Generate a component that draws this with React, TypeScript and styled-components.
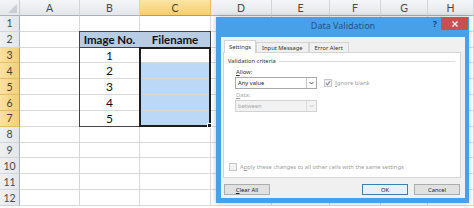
import React from "react";
import styled, { createGlobalStyle } from "styled-components";

const GlobalStyle = createGlobalStyle`
  html, body {
    margin: 0;
    padding: 0;
    background: #fff;
  }
  body {
    overflow: hidden;
    font-family: Lato, "Liberation Sans", sans-serif;
  }
`;

const COLS = ["A", "B", "C", "D", "E", "F", "G", "H"];
const COL_W = [60, 60, 71, 61, 58, 51, 47, 46];
const ROWS = [1, 2, 3, 4, 5, 6, 7, 8, 9, 10, 11, 12];

type Fill = "head" | "sel" | undefined;

const cellAt = (c: string, r: number): { text?: string; fill?: Fill; bold?: boolean } => {
  if (r === 2 && c === "B") return { text: "Image No.", fill: "head", bold: true };
  if (r === 2 && c === "C") return { text: "Filename", fill: "head", bold: true };
  if (r >= 3 && r <= 7 && c === "B") return { text: String(r - 2) };
  if (r >= 4 && r <= 7 && c === "C") return { fill: "sel" };
  return {};
};

const Screen = styled.div`
  position: relative;
  width: 474px;
  height: 208px;
  overflow: hidden;
  background: #fff;
`;

const Sheet = styled.div`
  display: grid;
  & > * {
    grid-area: 1 / 1;
  }
`;

const Grid = styled.div`
  display: grid;
  grid-template-columns: 20px ${COL_W.map((w) => w + "px").join(" ")};
  grid-template-rows: 16px repeat(12, 15.83px);
`;

const Overlay = styled(Grid)`
  pointer-events: none;
`;

const Corner = styled.div`
  position: relative;
  background: linear-gradient(#f3f4f6, #e4e7eb);
  border-right: 1px solid #c9cdd3;
  border-bottom: 1px solid #aab1ba;
  &::after {
    content: "";
    position: absolute;
    right: 2px;
    bottom: 2px;
    border-style: solid;
    border-width: 0 0 9px 9px;
    border-color: transparent transparent #c9ced4 transparent;
  }
`;

const ColHead = styled.div<{ $active?: boolean }>`
  display: flex;
  align-items: center;
  justify-content: center;
  font-size: 10.5px;
  color: ${(p) => (p.$active ? "#4a3f2a" : "#4a4a4a")};
  background: ${(p) =>
    p.$active ? "linear-gradient(#fbe4a6, #f5cf6e)" : "linear-gradient(#f5f6f8, #e3e6ea)"};
  border-right: 1px solid ${(p) => (p.$active ? "#e2bd6a" : "#d2d6db")};
  border-bottom: 1px solid ${(p) => (p.$active ? "#c79a3e" : "#aab1ba")};
`;

const RowHead = styled.div<{ $active?: boolean }>`
  display: flex;
  align-items: center;
  justify-content: center;
  font-size: 10.5px;
  color: ${(p) => (p.$active ? "#4a3f2a" : "#4a4a4a")};
  background: ${(p) =>
    p.$active ? "linear-gradient(90deg, #fbe1a0, #f6cf76)" : "linear-gradient(90deg, #eef0f3, #e3e6ea)"};
  border-right: 1px solid ${(p) => (p.$active ? "#c79a3e" : "#aab1ba")};
  border-bottom: 1px solid ${(p) => (p.$active ? "#e2bd6a" : "#d2d6db")};
`;

const Cell = styled.div<{ $fill?: Fill; $bold?: boolean }>`
  display: flex;
  align-items: center;
  justify-content: center;
  font-size: ${(p) => (p.$bold ? 11.5 : 12)}px;
  font-weight: ${(p) => (p.$bold ? 700 : 400)};
  color: #111;
  background: ${(p) => (p.$fill === "head" ? "#b8cce4" : p.$fill === "sel" ? "#bcd8f7" : "#fff")};
  border-right: 1px solid ${(p) => (p.$fill === "head" ? "#b8cce4" : "#d9d9d9")};
  border-bottom: 1px solid #d9d9d9;
`;

const TableBox = styled.div`
  grid-column: 3 / 5;
  grid-row: 3 / 9;
  margin: -1px 0 0 -1px;
  border: 1px solid #444;
`;

const HeaderRule = styled.div`
  grid-column: 3 / 5;
  grid-row: 3 / 4;
  margin-left: -1px;
  border-bottom: 1px solid #444;
`;

const Selection = styled.div`
  position: relative;
  grid-column: 4 / 5;
  grid-row: 4 / 9;
  margin: -1px 0 0 -1px;
  border: 2px solid #1e1e1e;
  &::after {
    content: "";
    position: absolute;
    right: -3px;
    bottom: -3px;
    width: 3px;
    height: 3px;
    background: #1e1e1e;
    border: 1px solid #fff;
  }
`;

/* dialog */

const Dialog = styled.div`
  position: absolute;
  left: 216px;
  top: 17px;
  width: 253px;
  height: 186px;
  box-sizing: border-box;
  display: flex;
  flex-direction: column;
  padding: 0 4px 5px 5px;
  background: #48a0e8;
  box-shadow: 0 0 5px rgba(0, 0, 0, 0.25);
  font-family: "Noto Sans", "Open Sans", sans-serif;
`;

const TitleBar = styled.div`
  height: 20px;
  display: grid;
  grid-template-columns: 1fr auto 1fr;
`;

const Title = styled.div`
  grid-column: 2;
  padding-top: 3px;
  font-size: 9px;
  line-height: 12px;
  color: #22528c;
`;

const Controls = styled.div`
  grid-column: 3;
  display: flex;
  justify-content: flex-end;
  align-items: flex-start;
  gap: 4px;
  margin-right: -3px;
`;

const Help = styled.span`
  padding-top: 2px;
  font-size: 9px;
  line-height: 10px;
  font-weight: 700;
  color: #1f4a80;
`;

const CloseBtn = styled.div`
  width: 27px;
  height: 13px;
  display: flex;
  align-items: center;
  justify-content: center;
  background: #c75050;
`;

const Body = styled.div`
  flex: 1;
  display: flex;
  flex-direction: column;
  padding: 3px 4px 3px 2px;
  background: #f0f0f0;
  font-size: 5.8px;
  color: #222;
`;

const TabStrip = styled.div`
  height: 12px;
  display: flex;
  align-items: flex-end;
  padding-left: 1px;
  position: relative;
  z-index: 1;
`;

const Tab = styled.div<{ $active?: boolean }>`
  height: ${(p) => (p.$active ? 13 : 10)}px;
  margin-bottom: ${(p) => (p.$active ? -1 : 0)}px;
  box-sizing: border-box;
  display: flex;
  align-items: center;
  padding: 0 ${(p) => (p.$active ? 4 : 5)}px;
  border: 1px solid #d4d4d4;
  border-bottom: none;
  background: ${(p) => (p.$active ? "#fff" : "#f0f0f0")};
  color: #333;
`;

const Panel = styled.div`
  height: 126px;
  box-sizing: border-box;
  display: flex;
  flex-direction: column;
  padding: 4px 5px 6px 4px;
  background: #fff;
  border: 1px solid #d4d4d4;
`;

const GroupTitle = styled.div`
  display: flex;
  align-items: center;
  gap: 3px;
  line-height: 8px;
  color: #333;
  &::after {
    content: "";
    flex: 1;
    height: 1px;
    background: #dcdcdc;
  }
`;

const Field = styled.div`
  display: flex;
  flex-direction: column;
  margin-left: 7px;
`;

const Label = styled.div<{ $disabled?: boolean; $gap: number }>`
  margin-top: ${(p) => p.$gap}px;
  padding-left: 1px;
  line-height: 8px;
  color: ${(p) => (p.$disabled ? "#a8a8a8" : "#333")};
`;

const FieldRow = styled.div`
  display: flex;
  align-items: center;
  gap: 7px;
  margin-top: 1px;
`;

const Combo = styled.div<{ $disabled?: boolean }>`
  width: 82px;
  height: 12px;
  box-sizing: border-box;
  display: flex;
  align-items: stretch;
  border: 1px solid ${(p) => (p.$disabled ? "#d2d2d2" : "#a9a9a9")};
  background: ${(p) => (p.$disabled ? "#f2f2f2" : "#fff")};
  color: ${(p) => (p.$disabled ? "#a8a8a8" : "#222")};
`;

const ComboText = styled.span`
  flex: 1;
  display: flex;
  align-items: center;
  padding-left: 2px;
`;

const ComboArrow = styled.span<{ $disabled?: boolean }>`
  width: 9px;
  display: flex;
  align-items: center;
  justify-content: center;
  border-left: 1px solid ${(p) => (p.$disabled ? "#dcdcdc" : "#c8c8c8")};
`;

const CheckLine = styled.label<{ $disabled?: boolean }>`
  display: flex;
  align-items: center;
  gap: 3px;
  line-height: 8px;
  color: ${(p) => (p.$disabled ? "#a0a0a0" : "#333")};
`;

const Box = styled.span<{ $disabled?: boolean }>`
  width: 6px;
  height: 6px;
  display: flex;
  align-items: center;
  justify-content: center;
  border: 1px solid ${(p) => (p.$disabled ? "#c8c8c8" : "#8a8a8a")};
  background: ${(p) => (p.$disabled ? "#f2f2f2" : "#fff")};
`;

const BottomLine = styled(CheckLine)`
  margin-top: auto;
  margin-left: 1px;
`;

const ButtonRow = styled.div`
  margin-top: 6px;
  height: 11px;
  display: flex;
  padding: 0 1px;
  gap: 6px;
`;

const Button = styled.div<{ $default?: boolean; $push?: boolean }>`
  width: 46px;
  box-sizing: border-box;
  display: flex;
  align-items: center;
  justify-content: center;
  margin-left: ${(p) => (p.$push ? "auto" : "0")};
  border: 1px solid ${(p) => (p.$default ? "#3c7fb1" : "#adadad")};
  background: ${(p) => (p.$default ? "#e5f1fb" : "#e1e1e1")};
  color: #222;
`;

const Chevron = ({ color }: { color: string }) => (
  <svg width="5" height="4" viewBox="0 0 5 4">
    <path d="M0.5 1 L2.5 3 L4.5 1" fill="none" stroke={color} strokeWidth="0.9" />
  </svg>
);

const Tick = ({ color }: { color: string }) => (
  <svg width="6" height="6" viewBox="0 0 6 6">
    <path d="M0.8 3.2 L2.4 4.8 L5.2 1" fill="none" stroke={color} strokeWidth="1.1" />
  </svg>
);

export default function App() {
  return (
    <>
      <GlobalStyle />
      <Screen>
        <Sheet>
          <Grid>
            <Corner />
            {COLS.map((c) => (
              <ColHead key={c} $active={c === "C"}>
                {c}
              </ColHead>
            ))}
            {ROWS.map((r) => (
              <React.Fragment key={r}>
                <RowHead $active={r >= 3 && r <= 7}>{r}</RowHead>
                {COLS.map((c) => {
                  const v = cellAt(c, r);
                  return (
                    <Cell key={c + r} $fill={v.fill} $bold={v.bold}>
                      {v.text}
                    </Cell>
                  );
                })}
              </React.Fragment>
            ))}
          </Grid>
          <Overlay>
            <TableBox />
            <HeaderRule />
            <Selection />
          </Overlay>
        </Sheet>

        <Dialog>
          <TitleBar>
            <Title>Data Validation</Title>
            <Controls>
              <Help>?</Help>
              <CloseBtn>
                <svg width="6" height="6" viewBox="0 0 6 6">
                  <path d="M0.5 0.5 L5.5 5.5 M5.5 0.5 L0.5 5.5" stroke="#fff" strokeWidth="1.2" />
                </svg>
              </CloseBtn>
            </Controls>
          </TitleBar>
          <Body>
            <TabStrip>
              <Tab $active>Settings</Tab>
              <Tab>Input Message</Tab>
              <Tab>Error Alert</Tab>
            </TabStrip>
            <Panel>
              <GroupTitle>Validation criteria</GroupTitle>
              <Field>
                <Label $gap={3}>
                  <u>A</u>llow:
                </Label>
                <FieldRow>
                  <Combo>
                    <ComboText>Any value</ComboText>
                    <ComboArrow>
                      <Chevron color="#444" />
                    </ComboArrow>
                  </Combo>
                  <CheckLine $disabled>
                    <Box $disabled>
                      <Tick color="#8c8c8c" />
                    </Box>
                    <span>
                      <u>I</u>gnore blank
                    </span>
                  </CheckLine>
                </FieldRow>
                <Label $disabled $gap={2}>
                  <u>D</u>ata:
                </Label>
                <FieldRow>
                  <Combo $disabled>
                    <ComboText>between</ComboText>
                    <ComboArrow $disabled>
                      <Chevron color="#c0c0c0" />
                    </ComboArrow>
                  </Combo>
                </FieldRow>
              </Field>
              <BottomLine $disabled>
                <Box $disabled />
                <span>
                  A<u>p</u>ply these changes to all other cells with the same settings
                </span>
              </BottomLine>
            </Panel>
            <ButtonRow>
              <Button>
                <span>
                  <u>C</u>lear All
                </span>
              </Button>
              <Button $default $push>
                OK
              </Button>
              <Button>Cancel</Button>
            </ButtonRow>
          </Body>
        </Dialog>
      </Screen>
    </>
  );
}
